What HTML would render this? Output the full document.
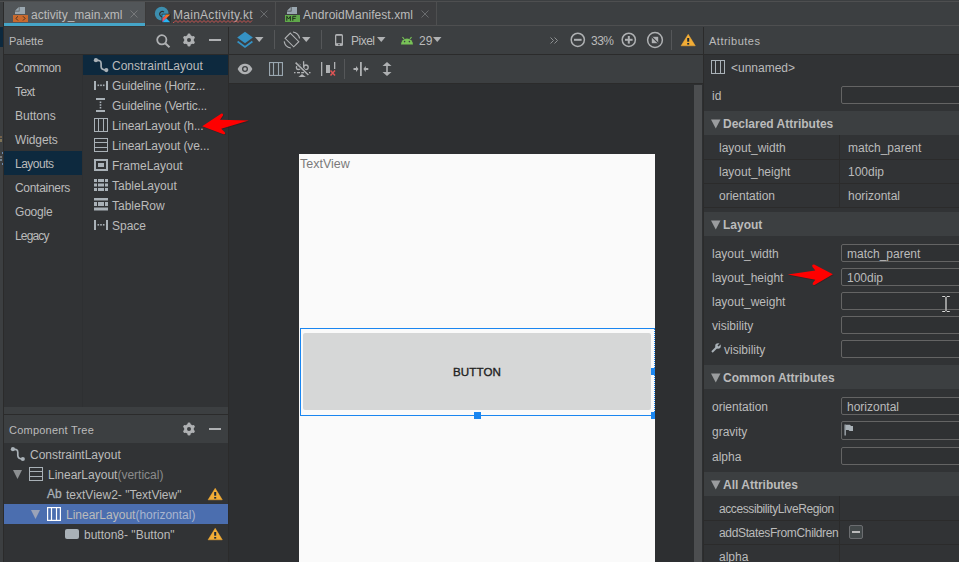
<!DOCTYPE html>
<html><head><meta charset="utf-8">
<style>
*{margin:0;padding:0;box-sizing:border-box}
html,body{width:959px;height:562px;overflow:hidden;background:#3c3f41;font-family:"Liberation Sans",sans-serif;font-size:12px;color:#bbbbbb}
.a{position:absolute}
.t{position:absolute;white-space:pre;line-height:14px}
svg{position:absolute;overflow:visible}
.tb{font-size:12px;font-weight:bold}
</style></head><body>
<!-- top line -->
<div class="a" style="left:0;top:0;width:959px;height:1px;background:#3c3f41"></div>
<div class="a" style="left:0;top:1px;width:959px;height:1px;background:#4e4f50"></div>
<!-- left stripe -->
<div class="a" style="left:0;top:2px;width:3px;height:560px;background:#3c3f41"></div>
<div class="a" style="left:0;top:27px;width:3px;height:20px;background:#0d293e"></div>
<div class="a" style="left:3px;top:2px;width:1px;height:560px;background:#2b2b2b"></div>
<div class="a" style="left:0;top:136px;width:2px;height:2px;background:#8a7050;opacity:0.7"></div>
<div class="a" style="left:0;top:139px;width:2px;height:3px;background:#9a8a60;opacity:0.7"></div>
<div class="a" style="left:2px;top:152px;width:1px;height:2px;background:#6a8ab0"></div>
<div class="a" style="left:0;top:156px;width:2px;height:2px;background:#909090;opacity:0.7"></div>
<div class="a" style="left:0;top:159px;width:2px;height:2px;background:#8aa0b0;opacity:0.7"></div>
<div class="a" style="left:2px;top:163px;width:1px;height:2px;background:#6a8ab0"></div>

<!-- TAB BAR -->
<div class="a" style="left:4px;top:2px;width:433px;height:23px;background:#3d3e40"></div>
<div class="a" style="left:437px;top:2px;width:522px;height:23px;background:#3c3f41"></div>
<div class="a" style="left:4px;top:25px;width:955px;height:1px;background:#4e4f50"></div>
<div class="a" style="left:4px;top:2px;width:141px;height:21px;background:#525659"></div>
<div class="a" style="left:4px;top:23px;width:141px;height:3px;background:#45a5c8"></div>
<div class="a" style="left:4px;top:26px;width:141px;height:1px;background:#363738"></div>
<div class="a" style="left:145px;top:2px;width:1px;height:24px;background:#3a3a3a"></div>
<div class="a" style="left:275px;top:2px;width:1px;height:23px;background:#4e4f50"></div>
<div class="a" style="left:436px;top:2px;width:1px;height:23px;background:#4e4f50"></div>
<!-- tab1 icon -->
<svg style="left:13px;top:6px" width="16" height="17" viewBox="0 0 16 17">
  <path d="M6.5 1 H12 V8 H2 V5.5 H6.5 Z" fill="#9aa7b0"/>
  <path d="M2 4.8 L5.8 1 V4.8 Z" fill="#9aa7b0"/>
  <rect x="0" y="9" width="15" height="7" fill="#c96a2e"/>
  <path d="M5 10.3 L2.9 12.4 L5 14.5 M10 10.3 L12.1 12.4 L10 14.5" stroke="#3a2a20" stroke-width="0.9" fill="none"/>
</svg>
<div class="t" style="left:31px;top:8px;color:#bbbbbb">activity_main.xml</div>
<svg style="left:130px;top:10px" width="8" height="8"><path d="M0.5 0.5 L7.5 7.5 M7.5 0.5 L0.5 7.5" stroke="#77797b" stroke-width="1"/></svg>
<!-- tab2 icon -->
<svg style="left:154px;top:6px" width="18" height="18" viewBox="0 0 18 18">
  <defs><linearGradient id="kg" x1="1" y1="0" x2="0" y2="1"><stop offset="0" stop-color="#f88909"/><stop offset="0.6" stop-color="#e4584d"/><stop offset="1" stop-color="#c757bc"/></linearGradient></defs>
  <circle cx="7.7" cy="7.7" r="6.9" fill="#3d8eae"/>
  <path d="M10 6.2 A2.6 2.6 0 1 0 9.6 10.4" stroke="#2b2f33" stroke-width="1.1" fill="none"/>
  <rect x="7.6" y="7.7" width="9.4" height="9.3" fill="#2f3234"/>
  <path d="M8.4 8.5 H12.2 L8.4 12.3 Z" fill="#29a8e0"/>
  <path d="M12.2 8.5 H16.2 L8.4 16.2 V12.3 Z" fill="url(#kg)"/>
  <path d="M12.3 12.3 L16.2 16.2 H8.4 Z" fill="#29b6f6"/>
</svg>
<div class="t" style="left:173px;top:8px;letter-spacing:0.27px">MainActivity.kt</div>
<svg style="left:172px;top:0px" width="85" height="26"><path d="M1 22.5 L2 22.5 L4 20.5 L6 22.5 L8 20.5 L10 22.5 L12 20.5 L14 22.5 L16 20.5 L18 22.5 L20 20.5 L22 22.5 L24 20.5 L26 22.5 L28 20.5 L30 22.5 L32 20.5 L34 22.5 L36 20.5 L38 22.5 L40 20.5 L42 22.5 L44 20.5 L46 22.5 L48 20.5 L50 22.5 L52 20.5 L54 22.5 L56 20.5 L58 22.5 L60 20.5 L62 22.5 L64 20.5 L66 22.5 L68 20.5 L70 22.5 L72 20.5 L74 22.5 L76 20.5 L78 22.5 L80 20.5" stroke="#c75450" stroke-width="1" fill="none"/></svg>
<svg style="left:260px;top:10px" width="8" height="8"><path d="M0.5 0.5 L7.5 7.5 M7.5 0.5 L0.5 7.5" stroke="#6a6c6e" stroke-width="1"/></svg>
<!-- tab3 icon -->
<svg style="left:285px;top:6px" width="16" height="17" viewBox="0 0 16 17">
  <path d="M6.5 1 H12 V8 H2 V5.5 H6.5 Z" fill="#9aa7b0"/>
  <path d="M2 4.8 L5.8 1 V4.8 Z" fill="#9aa7b0"/>
  <rect x="0" y="9" width="15" height="7" fill="#5fa84a"/>
  <path d="M1.8 14.8 V10.3 L3.6 13 L5.4 10.3 V14.8 M7.8 14.8 V10.3 H11.2 M7.8 12.4 H10.6" stroke="#22301f" stroke-width="1" fill="none"/>
</svg>
<div class="t" style="left:303px;top:8px;letter-spacing:0.07px">AndroidManifest.xml</div>
<svg style="left:421px;top:10px" width="8" height="8"><path d="M0.5 0.5 L7.5 7.5 M7.5 0.5 L0.5 7.5" stroke="#6a6c6e" stroke-width="1"/></svg>
<!-- PALETTE PANEL -->
<div class="a" style="left:4px;top:27px;width:224px;height:27px;background:#3c3f41"></div>
<div class="t" style="left:9px;top:34px;font-size:11px">Palette</div>
<svg style="left:156px;top:34px" width="15" height="14" viewBox="0 0 15 14"><circle cx="5.8" cy="5.8" r="4.6" stroke="#afb1b3" stroke-width="1.8" fill="none"/><path d="M9.2 9.2 L13.5 13.2" stroke="#afb1b3" stroke-width="2"/></svg>
<svg style="left:182px;top:33px" width="14" height="14" viewBox="0 0 14 14"><g fill="#afb1b3"><circle cx="7" cy="7" r="4.9"/><rect x="5.5" y="0.4" width="3" height="13.2" rx="1.3"/><rect x="5.5" y="0.6" width="3" height="12.8" rx="1.3" transform="rotate(60 7 7)"/><rect x="5.5" y="0.6" width="3" height="12.8" rx="1.3" transform="rotate(120 7 7)"/></g><circle cx="7" cy="7" r="2" fill="#3c3f41"/></svg>
<div class="a" style="left:209px;top:39px;width:12px;height:2px;background:#afb1b3"></div>
<div class="a" style="left:4px;top:54px;width:224px;height:1px;background:#2b2b2b"></div>
<div class="a" style="left:4px;top:55px;width:224px;height:352px;background:#313335"></div>
<div class="a" style="left:82px;top:55px;width:1px;height:352px;background:#2e3032"></div>
<div class="a" style="left:4px;top:151px;width:78px;height:24px;background:#0d293e"></div>
<div class="t" style="left:15px;top:61px;letter-spacing:-0.5px">Common</div>
<div class="t" style="left:15px;top:85px;letter-spacing:-0.6px">Text</div>
<div class="t" style="left:15px;top:109px">Buttons</div>
<div class="t" style="left:15px;top:133px;letter-spacing:-0.1px">Widgets</div>
<div class="t" style="left:15px;top:157px;letter-spacing:-0.5px">Layouts</div>
<div class="t" style="left:15px;top:181px;letter-spacing:-0.3px">Containers</div>
<div class="t" style="left:15px;top:205px;letter-spacing:-0.2px">Google</div>
<div class="t" style="left:15px;top:229px;letter-spacing:-0.85px">Legacy</div>

<div class="a" style="left:83px;top:55px;width:145px;height:20px;background:#0d293e"></div>
<svg style="left:93px;top:58px" width="16" height="15" viewBox="0 0 16 15"><circle cx="2.9" cy="2.2" r="2.1" fill="#a9b1b7"/><circle cx="13.3" cy="12.1" r="2.1" fill="#a9b1b7"/><path d="M2.9 2.2 C6.5 2.2 8.1 2.6 8.1 5.5 V8.6 C8.1 11.6 10 12.1 13.3 12.1" stroke="#a9b1b7" stroke-width="1.7" fill="none"/></svg>
<div class="t" style="left:112px;top:59px">ConstraintLayout</div>
<svg style="left:94px;top:81px" width="14" height="9" viewBox="0 0 14 9"><g fill="#a9b1b7"><rect x="0" y="0" width="2" height="9"/><rect x="12" y="0" width="2" height="9"/><rect x="3.5" y="3.5" width="1.6" height="1.6"/><rect x="6.2" y="3.5" width="1.6" height="1.6"/><rect x="8.9" y="3.5" width="1.6" height="1.6"/></g></svg>
<div class="t" style="left:112px;top:79px;letter-spacing:-0.15px">Guideline (Horiz...</div>
<svg style="left:96px;top:98px" width="9" height="14" viewBox="0 0 9 14"><g fill="#a9b1b7"><rect x="0" y="0" width="9" height="2"/><rect x="0" y="12" width="9" height="2"/><rect x="3.7" y="3.5" width="1.6" height="1.6"/><rect x="3.7" y="6.2" width="1.6" height="1.6"/><rect x="3.7" y="8.9" width="1.6" height="1.6"/></g></svg>
<div class="t" style="left:112px;top:99px;letter-spacing:-0.15px">Guideline (Vertic...</div>
<svg style="left:94px;top:118px" width="14" height="14" viewBox="0 0 14 14"><g fill="none" stroke="#a9b1b7" stroke-width="1"><rect x="0.5" y="0.5" width="13" height="13"/><path d="M4.5 0.5 V13.5 M9.5 0.5 V13.5"/></g></svg>
<div class="t" style="left:112px;top:119px;letter-spacing:-0.1px">LinearLayout (h...</div>
<svg style="left:94px;top:138px" width="14" height="14" viewBox="0 0 14 14"><g fill="none" stroke="#a9b1b7" stroke-width="1"><rect x="0.5" y="0.5" width="13" height="13"/><path d="M0.5 4.5 H13.5 M0.5 9.5 H13.5"/></g></svg>
<div class="t" style="left:112px;top:139px;letter-spacing:-0.1px">LinearLayout (ve...</div>
<svg style="left:94px;top:159px" width="14" height="12" viewBox="0 0 14 12"><g fill="#a9b1b7"><path d="M0 0 H14 V12 H0 Z M2 2 V10 H12 V2 Z" fill-rule="evenodd"/><rect x="4" y="4" width="6" height="4"/></g></svg>
<div class="t" style="left:112px;top:159px">FrameLayout</div>
<svg style="left:94px;top:179px" width="14" height="12" viewBox="0 0 14 12"><g fill="#a9b1b7"><rect x="0" y="0" width="3" height="3"/><rect x="4" y="0" width="6" height="3"/><rect x="11" y="0" width="3" height="3"/><rect x="0" y="4.5" width="3" height="3"/><rect x="4" y="4.5" width="6" height="3"/><rect x="11" y="4.5" width="3" height="3"/><rect x="0" y="9" width="3" height="3"/><rect x="4" y="9" width="6" height="3"/><rect x="11" y="9" width="3" height="3"/></g></svg>
<div class="t" style="left:112px;top:179px">TableLayout</div>
<svg style="left:94px;top:198px" width="14" height="13" viewBox="0 0 14 13"><g fill="#a9b1b7"><rect x="0" y="0" width="14" height="2.5"/><rect x="0" y="4" width="3" height="4"/><rect x="4" y="4" width="6" height="4"/><rect x="11" y="4" width="3" height="4"/><rect x="0" y="9.5" width="14" height="3"/></g></svg>
<div class="t" style="left:112px;top:199px">TableRow</div>
<svg style="left:94px;top:220px" width="14" height="10" viewBox="0 0 14 10"><g fill="#a9b1b7"><rect x="0" y="0" width="2" height="10"/><rect x="12" y="0" width="2" height="10"/><rect x="3.5" y="4" width="1.6" height="1.6"/><rect x="6.2" y="4" width="1.6" height="1.6"/><rect x="8.9" y="4" width="1.6" height="1.6"/></g></svg>
<div class="t" style="left:112px;top:219px">Space</div>

<!-- splitter + component tree -->
<div class="a" style="left:4px;top:407px;width:224px;height:7px;background:#3c3f41"></div>
<div class="a" style="left:4px;top:414px;width:224px;height:1px;background:#2b2b2b"></div>
<div class="a" style="left:4px;top:415px;width:224px;height:28px;background:#3c3f41"></div>
<div class="t" style="left:9px;top:423px;font-size:11px;letter-spacing:0.22px">Component Tree</div>
<svg style="left:182px;top:422px" width="14" height="14" viewBox="0 0 14 14"><g fill="#afb1b3"><circle cx="7" cy="7" r="4.9"/><rect x="5.5" y="0.4" width="3" height="13.2" rx="1.3"/><rect x="5.5" y="0.6" width="3" height="12.8" rx="1.3" transform="rotate(60 7 7)"/><rect x="5.5" y="0.6" width="3" height="12.8" rx="1.3" transform="rotate(120 7 7)"/></g><circle cx="7" cy="7" r="2" fill="#3c3f41"/></svg>
<div class="a" style="left:209px;top:428px;width:12px;height:2px;background:#afb1b3"></div>
<div class="a" style="left:4px;top:443px;width:224px;height:119px;background:#313335"></div>
<div class="a" style="left:4px;top:504px;width:224px;height:20px;background:#4b6eaf"></div>
<svg style="left:10px;top:447px" width="16" height="15" viewBox="0 0 16 15"><circle cx="2.9" cy="2.2" r="2.1" fill="#a9b1b7"/><circle cx="12.8" cy="12" r="2.1" fill="#a9b1b7"/><path d="M2.9 2.2 C6.3 2.2 7.8 2.6 7.8 5.5 V8.6 C7.8 11.5 9.6 12 12.8 12" stroke="#a9b1b7" stroke-width="1.7" fill="none"/></svg>
<div class="t" style="left:30px;top:448px">ConstraintLayout</div>
<svg style="left:13px;top:470px" width="9" height="9"><path d="M0 0 H9 L4.5 9 Z" fill="#8c8f91"/></svg>
<svg style="left:29px;top:467px" width="14" height="14" viewBox="0 0 14 14"><g fill="none" stroke="#a9b1b7" stroke-width="1"><rect x="0.5" y="0.5" width="13" height="13"/><path d="M0.5 4.5 H13.5 M0.5 9.5 H13.5"/></g></svg>
<div class="t" style="left:48px;top:468px">LinearLayout<span style="color:#8c8c8c">(vertical)</span></div>
<div class="t" style="left:47px;top:487px;color:#a9b1b7;font-size:12px;-webkit-text-stroke:0.3px #a9b1b7">Ab</div>
<div class="t" style="left:66px;top:488px">textView2- "TextView"</div>
<svg style="left:208px;top:488px" width="15" height="13" viewBox="0 0 15 13"><path d="M7.2 0.3 L14.3 11.8 H0.1 Z" stroke="#f2ad36" stroke-width="0.5" stroke-linejoin="round" fill="#f2ad36"/><rect x="6.2" y="4" width="2" height="3.7" fill="#1b2838"/><rect x="6.2" y="9" width="2" height="1.6" fill="#1b2838"/></svg>
<svg style="left:31px;top:510px" width="9" height="9"><path d="M0 0 H9 L4.5 9 Z" fill="#9aa3b8"/></svg>
<svg style="left:47px;top:507px" width="14" height="14" viewBox="0 0 14 14"><g fill="none" stroke="#ffffff" stroke-width="1.2"><rect x="0.6" y="0.6" width="12.8" height="12.8"/><path d="M4.5 0.5 V13.5 M9.5 0.5 V13.5"/></g></svg>
<div class="t" style="left:66px;top:508px">LinearLayout<span style="color:#a8b5cf">(horizontal)</span></div>
<svg style="left:65px;top:529px" width="15" height="11"><rect x="0" y="0" width="14" height="10" rx="2" fill="#a9b1b7"/></svg>
<div class="t" style="left:84px;top:528px">button8- "Button"</div>
<svg style="left:208px;top:528px" width="15" height="13" viewBox="0 0 15 13"><path d="M7.2 0.3 L14.3 11.8 H0.1 Z" stroke="#f2ad36" stroke-width="0.5" stroke-linejoin="round" fill="#f2ad36"/><rect x="6.2" y="4" width="2" height="3.7" fill="#1b2838"/><rect x="6.2" y="9" width="2" height="1.6" fill="#1b2838"/></svg>
<!-- divider palette/design -->
<div class="a" style="left:228px;top:27px;width:1px;height:535px;background:#2b2b2b"></div>
<!-- DESIGN AREA -->
<div class="a" style="left:229px;top:27px;width:474px;height:27px;background:#3c3f41"></div>
<div class="a" style="left:229px;top:54px;width:474px;height:1px;background:#2b2b2b"></div>
<div class="a" style="left:229px;top:55px;width:474px;height:28px;background:#3c3f41"></div>
<div class="a" style="left:229px;top:83px;width:474px;height:1px;background:#2b2b2b"></div>
<div class="a" style="left:229px;top:84px;width:474px;height:478px;background:#2d2f31"></div>
<div class="a" style="left:694px;top:85px;width:8px;height:477px;background:#4c4e50"></div>
<div class="a" style="left:703px;top:27px;width:1px;height:535px;background:#2b2b2b"></div>
<!-- row1 icons -->
<svg style="left:237px;top:31px" width="17" height="17" viewBox="0 0 17 17"><path d="M0.2 6.6 L8 0.8 L15.9 6.6 L8 12.2 Z" fill="#3592c4"/><path d="M0.6 10.5 L8 16 L15.4 10.5" stroke="#3592c4" stroke-width="1.8" fill="none"/></svg>
<svg style="left:255px;top:37px" width="9" height="5"><path d="M0 0 H8.5 L4.25 5 Z" fill="#afb1b3"/></svg>
<div class="a" style="left:274px;top:30px;width:1px;height:19px;background:#555759"></div>
<svg style="left:283px;top:31px" width="18" height="18" viewBox="0 0 18 18"><path d="M7.3 2.1 L15.8 10.7 L10.7 15.8 L2.1 7.3 Z" stroke="#afb1b3" stroke-width="1.1" fill="none"/><path d="M10 1 A8 8 0 0 1 16.6 7.5" stroke="#afb1b3" stroke-width="1.2" fill="none"/><path d="M1.2 10.3 A8 8 0 0 0 7.8 17" stroke="#afb1b3" stroke-width="1.2" fill="none"/></svg>
<svg style="left:302px;top:37px" width="9" height="5"><path d="M0 0 H8.5 L4.25 5 Z" fill="#afb1b3"/></svg>
<div class="a" style="left:321px;top:30px;width:1px;height:19px;background:#555759"></div>
<svg style="left:335px;top:34px" width="9" height="13" viewBox="0 0 9 13"><rect x="0" y="0" width="8" height="12" rx="1.5" fill="#afb1b3"/><rect x="1.3" y="1.8" width="5.4" height="7.4" fill="#3c3f41"/><rect x="3" y="10.3" width="2" height="0.9" fill="#3c3f41"/></svg>
<div class="t" style="left:351px;top:34px;letter-spacing:-0.5px">Pixel</div>
<svg style="left:377px;top:37px" width="9" height="5"><path d="M0 0 H8.5 L4.25 5 Z" fill="#afb1b3"/></svg>
<svg style="left:400px;top:36px" width="14" height="9" viewBox="0 0 14 9"><path d="M1 8.5 A6 6 0 0 1 13 8.5 Z" fill="#78c257"/><path d="M2.5 1 L4 3 M11.5 1 L10 3" stroke="#78c257" stroke-width="1.2"/><circle cx="4.6" cy="5.6" r="0.8" fill="#3c3f41"/><circle cx="9.4" cy="5.6" r="0.8" fill="#3c3f41"/></svg>
<div class="t" style="left:419px;top:34px">29</div>
<svg style="left:433px;top:37px" width="9" height="5"><path d="M0 0 H8.5 L4.25 5 Z" fill="#afb1b3"/></svg>
<svg style="left:550px;top:37px" width="9" height="7"><path d="M0.5 0.5 L3.5 3.5 L0.5 6.5 M4.5 0.5 L7.5 3.5 L4.5 6.5" stroke="#8e9092" stroke-width="1" fill="none"/></svg>
<svg style="left:570px;top:32px" width="16" height="16" viewBox="0 0 16 16"><circle cx="7.8" cy="7.8" r="6.6" stroke="#afb1b3" stroke-width="1.5" fill="none"/><rect x="4" y="6.8" width="7.6" height="2" fill="#afb1b3"/></svg>
<div class="t" style="left:591px;top:34px;letter-spacing:-0.5px">33%</div>
<svg style="left:621px;top:32px" width="16" height="16" viewBox="0 0 16 16"><circle cx="7.8" cy="7.8" r="6.6" stroke="#afb1b3" stroke-width="1.5" fill="none"/><rect x="4" y="6.8" width="7.6" height="2" fill="#afb1b3"/><rect x="6.8" y="4" width="2" height="7.6" fill="#afb1b3"/></svg>
<svg style="left:646px;top:31px" width="18" height="18" viewBox="0 0 18 18"><circle cx="9" cy="9" r="7.4" stroke="#afb1b3" stroke-width="1.5" fill="none"/><path d="M5.8 5.8 H12.2 V12.2 H5.8 Z" fill="#afb1b3"/><path d="M5.8 5.8 L12.2 12.2" stroke="#3c3f41" stroke-width="1.2"/></svg>
<div class="a" style="left:671px;top:30px;width:1px;height:20px;background:#555759"></div>
<svg style="left:681px;top:34px" width="15" height="13" viewBox="0 0 15 13"><path d="M7.2 0.3 L14.3 11.8 H0.1 Z" stroke="#f2ad36" stroke-width="0.5" stroke-linejoin="round" fill="#f2ad36"/><rect x="6.2" y="4" width="2" height="3.7" fill="#1b2838"/><rect x="6.2" y="9" width="2" height="1.6" fill="#1b2838"/></svg>
<!-- row2 icons -->
<svg style="left:237px;top:63px" width="16" height="12" viewBox="0 0 16 12"><path d="M0.6 6 C3 1.5 5.5 0.8 8 0.8 C10.5 0.8 13 1.5 15.4 6 C13 10.5 10.5 11.2 8 11.2 C5.5 11.2 3 10.5 0.6 6 Z" fill="#afb1b3"/><circle cx="8" cy="6" r="3" fill="#3c3f41"/><circle cx="8" cy="6" r="1.7" fill="#afb1b3"/></svg>
<svg style="left:269px;top:62px" width="14" height="14" viewBox="0 0 14 14"><g fill="none" stroke="#9aa7b0" stroke-width="1.1"><rect x="0.55" y="0.55" width="12.9" height="12.9"/><path d="M4.5 0.5 V13.5 M9.5 0.5 V13.5"/></g></svg>
<svg style="left:290px;top:58px" width="24" height="22" viewBox="0 0 24 22"><g stroke="#afb1b3" fill="none" stroke-width="1.3"><circle cx="8.3" cy="9.6" r="1.9"/><path d="M7 6.6 C8.5 5.8 10.4 6.1 10.4 8 V11.6"/><path d="M13.6 3.2 V11.4"/><circle cx="15.9" cy="9.3" r="2.3"/></g><path d="M5 4 L18.8 17.4" stroke="#3c3f41" stroke-width="3.2"/><path d="M5.6 4.6 L18.4 17" stroke="#afb1b3" stroke-width="1.5"/><g fill="#afb1b3"><rect x="4" y="14" width="1.5" height="1.3"/><rect x="7" y="14" width="3" height="1.3"/><rect x="11.2" y="14" width="2.8" height="1.3"/><rect x="19" y="14" width="1.5" height="1.3"/><path d="M8.4 19 L12 16 L15.8 19 Z"/></g></svg>
<svg style="left:320px;top:62px" width="17" height="15" viewBox="0 0 17 15"><rect x="1" y="0" width="1.3" height="14" fill="#afb1b3"/><rect x="14" y="0" width="1.3" height="7" fill="#afb1b3"/><rect x="6" y="3" width="4" height="8" fill="#afb1b3"/><path d="M10.5 8.5 L15 13.5 M15 8.5 L10.5 13.5" stroke="#e05555" stroke-width="1.5"/></svg>
<div class="a" style="left:344px;top:59px;width:1px;height:20px;background:#555759"></div>
<svg style="left:353px;top:62px" width="16" height="14" viewBox="0 0 16 14"><rect x="7" y="0" width="1.8" height="14" fill="#afb1b3"/><path d="M0.5 6 H3 V4 L5.5 7 L3 10 V8 H0.5 Z" fill="#afb1b3"/><path d="M15.3 6 H12.8 V4 L10.3 7 L12.8 10 V8 H15.3 Z" fill="#afb1b3"/></svg>
<svg style="left:382px;top:62px" width="10" height="14" viewBox="0 0 10 14"><path d="M4.2 3.5 H5.8 V10.5 H4.2 Z" fill="#afb1b3"/><path d="M0.5 4 L5 0 L9.5 4 Z M0.5 10 L5 14 L9.5 10 Z" fill="#afb1b3"/></svg>

<!-- phone -->
<div class="a" style="left:299px;top:154px;width:356px;height:408px;background:#fafafa"></div>
<div class="t" style="left:300px;top:157px;color:#7a7a7a;font-size:12.5px">TextView</div>
<div class="a" style="left:303px;top:333px;width:348px;height:77px;background:#d6d7d7;border-radius:2px"></div>
<div class="t" style="left:453px;top:365px;color:#222;font-size:11.6px;font-weight:normal;-webkit-text-stroke:0.35px #222;letter-spacing:0.1px">BUTTON</div>
<div class="a" style="left:300px;top:328px;width:355px;height:88px;border:1px solid #1a86f0;border-right:none"></div>
<div class="a" style="left:654px;top:328px;width:1px;height:88px;border-right:1px dotted #1a86f0"></div>
<div class="a" style="left:474px;top:412px;width:7px;height:7px;background:#1a86f0"></div>
<div class="a" style="left:651px;top:368px;width:4px;height:7px;background:#1a86f0"></div>
<div class="a" style="left:651px;top:412px;width:4px;height:7px;background:#1a86f0"></div>
<!-- ATTRIBUTES PANEL -->
<div class="a" style="left:704px;top:27px;width:255px;height:27px;background:#3c3f41"></div>
<div class="t" style="left:709px;top:34px;font-size:11px;letter-spacing:0.5px">Attributes</div>
<div class="a" style="left:704px;top:54px;width:255px;height:1px;background:#2b2b2b"></div>
<div class="a" style="left:704px;top:55px;width:255px;height:507px;background:#313335"></div>
<svg style="left:711px;top:60px" width="15" height="15" viewBox="0 0 15 15"><g fill="none" stroke="#a9b1b7" stroke-width="1"><rect x="0.5" y="0.5" width="13" height="13"/><path d="M4.5 0.5 V13.5 M9.5 0.5 V13.5"/></g></svg>
<div class="t" style="left:731px;top:61px">&lt;unnamed&gt;</div>
<div class="t" style="left:712px;top:89px">id</div>
<div class="a" style="left:841px;top:86px;width:130px;height:18px;border:1px solid #646464;border-radius:2px;background:#2f3133"></div>

<div class="a" style="left:704px;top:111px;width:255px;height:24px;background:#3c3f41"></div>
<svg style="left:711px;top:119px" width="10" height="10"><path d="M0 0.5 H9.5 L4.75 9.5 Z" fill="#9a9c9e"/></svg>
<div class="t tb" style="left:723px;top:117px">Declared Attributes</div>
<div class="a" style="left:839px;top:135px;width:1px;height:72px;background:#2b2b2b"></div>
<div class="a" style="left:704px;top:159px;width:255px;height:1px;background:#2b2b2b"></div>
<div class="a" style="left:704px;top:183px;width:255px;height:1px;background:#2b2b2b"></div>
<div class="a" style="left:704px;top:207px;width:255px;height:1px;background:#2b2b2b"></div>
<div class="t" style="left:719px;top:141px">layout_width</div>
<div class="t" style="left:848px;top:141px">match_parent</div>
<div class="t" style="left:719px;top:165px">layout_height</div>
<div class="t" style="left:848px;top:165px">100dip</div>
<div class="t" style="left:719px;top:189px">orientation</div>
<div class="t" style="left:848px;top:189px">horizontal</div>

<div class="a" style="left:704px;top:212px;width:255px;height:24px;background:#3c3f41"></div>
<svg style="left:711px;top:220px" width="10" height="10"><path d="M0 0.5 H9.5 L4.75 9.5 Z" fill="#9a9c9e"/></svg>
<div class="t tb" style="left:723px;top:218px">Layout</div>
<div class="t" style="left:712px;top:247px">layout_width</div>
<div class="a" style="left:841px;top:244px;width:130px;height:18px;border:1px solid #646464;border-radius:2px;background:#2f3133"></div>
<div class="t" style="left:847px;top:247px">match_parent</div>
<div class="t" style="left:712px;top:271px">layout_height</div>
<div class="a" style="left:841px;top:268px;width:130px;height:18px;border:1px solid #646464;border-radius:2px;background:#2f3133"></div>
<div class="t" style="left:847px;top:271px">100dip</div>
<div class="t" style="left:712px;top:295px">layout_weight</div>
<div class="a" style="left:841px;top:292px;width:130px;height:18px;border:1px solid #646464;border-radius:2px;background:#2f3133"></div>
<div class="t" style="left:712px;top:319px">visibility</div>
<div class="a" style="left:841px;top:316px;width:130px;height:18px;border:1px solid #646464;border-radius:2px;background:#2f3133"></div>
<svg style="left:711px;top:343px" width="10" height="10" viewBox="0 0 10 10"><path d="M1 9 L5.5 4.5" stroke="#a9b1b7" stroke-width="2"/><circle cx="7" cy="3" r="2.8" fill="#a9b1b7"/><path d="M7 3 L9.5 0.5" stroke="#313335" stroke-width="1.6"/></svg>
<div class="t" style="left:724px;top:343px">visibility</div>
<div class="a" style="left:841px;top:340px;width:130px;height:18px;border:1px solid #646464;border-radius:2px;background:#2f3133"></div>
<!-- I-beam cursor -->
<svg style="left:941px;top:295px" width="10" height="18" viewBox="0 0 10 18"><path d="M1 1.5 H4 M6 1.5 H9 M1 16.5 H4 M6 16.5 H9 M5 2 V16" stroke="#1e1e1e" stroke-width="2.2" opacity="0.6"/><path d="M1.2 1.5 H4.2 M5.8 1.5 H8.8 M1.2 16.5 H4.2 M5.8 16.5 H8.8" stroke="#d8d8d8" stroke-width="1"/><path d="M5 2 V16" stroke="#d8d8d8" stroke-width="1.3"/></svg>

<div class="a" style="left:704px;top:365px;width:255px;height:24px;background:#3c3f41"></div>
<svg style="left:711px;top:373px" width="10" height="10"><path d="M0 0.5 H9.5 L4.75 9.5 Z" fill="#9a9c9e"/></svg>
<div class="t tb" style="left:723px;top:371px">Common Attributes</div>
<div class="t" style="left:712px;top:400px">orientation</div>
<div class="a" style="left:841px;top:397px;width:130px;height:18px;border:1px solid #646464;border-radius:2px;background:#2f3133"></div>
<div class="t" style="left:847px;top:400px">horizontal</div>
<div class="t" style="left:712px;top:425px">gravity</div>
<div class="a" style="left:841px;top:421px;width:130px;height:19px;border:1px solid #646464;border-radius:2px;background:#2f3133"></div>
<svg style="left:844px;top:424px" width="10" height="12" viewBox="0 0 10 12"><rect x="0.5" y="0.5" width="1.3" height="11" fill="#a9b1b7"/><path d="M1.8 0.8 H6 L7 2 H9 V7 H5.5 L4.5 6 H1.8 Z" fill="#a9b1b7"/></svg>
<div class="t" style="left:712px;top:450px">alpha</div>
<div class="a" style="left:841px;top:447px;width:130px;height:18px;border:1px solid #646464;border-radius:2px;background:#2f3133"></div>

<div class="a" style="left:704px;top:472px;width:255px;height:24px;background:#3c3f41"></div>
<svg style="left:711px;top:480px" width="10" height="10"><path d="M0 0.5 H9.5 L4.75 9.5 Z" fill="#9a9c9e"/></svg>
<div class="t tb" style="left:723px;top:478px">All Attributes</div>
<div class="a" style="left:839px;top:496px;width:1px;height:66px;background:#2b2b2b"></div>
<div class="a" style="left:704px;top:520px;width:255px;height:1px;background:#2b2b2b"></div>
<div class="a" style="left:704px;top:544px;width:255px;height:1px;background:#2b2b2b"></div>
<div class="t" style="left:719px;top:502px;letter-spacing:-0.4px">accessibilityLiveRegion</div>
<div class="t" style="left:719px;top:526px;letter-spacing:-0.35px">addStatesFromChildren</div>
<div class="t" style="left:719px;top:550px">alpha</div>
<div class="a" style="left:849px;top:525px;width:14px;height:14px;border:1px solid #6b6d70;border-radius:2px;background:#43494a"></div>
<div class="a" style="left:852px;top:531px;width:8px;height:2px;background:#bbbbbb"></div>

<!-- red arrows -->
<svg style="left:0;top:0" width="959" height="562">
<g filter="">
<path d="M202.2 126.2 L221.5 113.5 Q223.5 113 223 115.5 L220 119.8 L248.7 120.6 L221.2 128.8 L224.8 132.2 Q226 134.3 223.5 134.2 Z" fill="#2b1010" opacity="0.35" transform="translate(0.6,0.8)"/>
<path d="M202.2 126.2 L221.5 113.5 Q223.5 113 223 115.5 L220 119.8 L248.7 120.6 L221.2 128.8 L224.8 132.2 Q226 134.3 223.5 134.2 Z" fill="#ff0000"/>
<path d="M787.8 274.6 L815.3 270.5 L812.5 267 Q811.5 264.2 814.2 264.6 L832.9 274.3 L814.5 285 Q812 285.5 812.8 283 L815.3 279.7 Z" fill="#2b1010" opacity="0.35" transform="translate(0.6,0.8)"/>
<path d="M787.8 274.6 L815.3 270.5 L812.5 267 Q811.5 264.2 814.2 264.6 L832.9 274.3 L814.5 285 Q812 285.5 812.8 283 L815.3 279.7 Z" fill="#ff0000"/>
</g>
</svg>
</body></html>
